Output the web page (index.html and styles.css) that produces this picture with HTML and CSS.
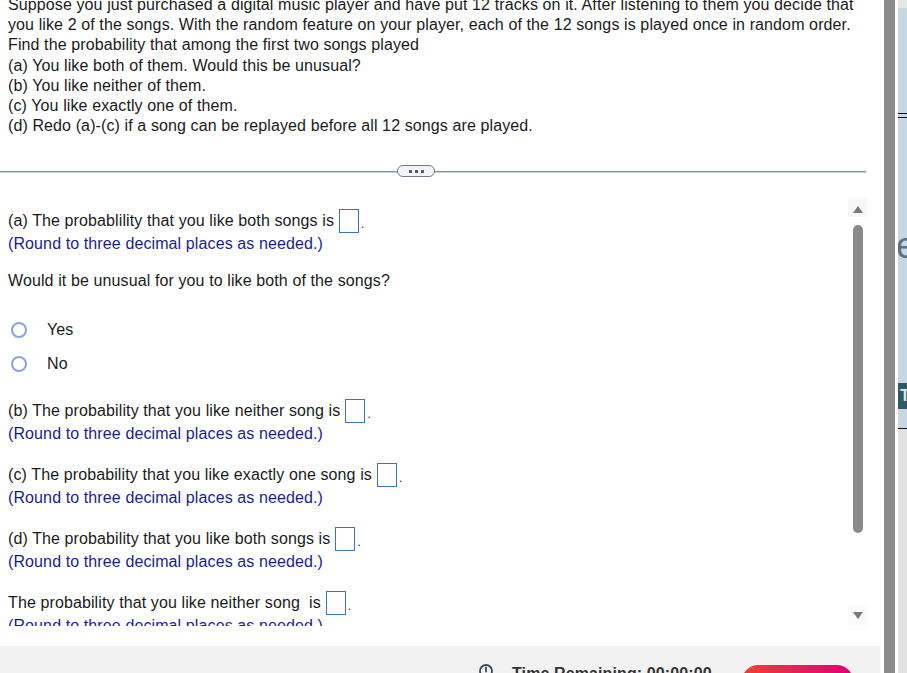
FILE: index.html
```html
<!DOCTYPE html>
<html lang="en">
<head>
  <meta charset="UTF-8">
  <title>Homework - Question</title>
  <link rel="stylesheet" href="styles.css">
</head>
<body>
  <div class="main">
    <div class="question">
      Suppose you just purchased a digital music player and have put 12 tracks on it. After listening to them you decide that<br>
      you like 2 of the songs. With the random feature on your player, each of the 12 songs is played once in random order.<br>
      Find the probability that among the first two songs played<br>
      (a) You like both of them. Would this be unusual?<br>
      (b) You like neither of them.<br>
      (c) You like exactly one of them.<br>
      (d) Redo (a)-(c) if a song can be replayed before all 12 songs are played.
    </div>

    <div class="divider">
      <span class="pill"><i></i><i></i><i></i></span>
    </div>

    <div class="answers">
      <div class="pane">
        <div class="part">
          <div class="prompt">(a) The probablility that you like both songs is<span class="box"></span><span class="dot">.</span></div>
          <div class="hint">(Round to three decimal places as needed.)</div>
        </div>
        <div class="ask">Would it be unusual for you to like both of the songs?</div>
        <div class="choices">
          <label class="choice"><span class="radio"></span>Yes</label>
          <label class="choice"><span class="radio"></span>No</label>
        </div>
        <div class="part">
          <div class="prompt">(b) The probability that you like neither song is<span class="box"></span><span class="dot">.</span></div>
          <div class="hint">(Round to three decimal places as needed.)</div>
        </div>
        <div class="part">
          <div class="prompt">(c) The probability that you like exactly one song is<span class="box"></span><span class="dot">.</span></div>
          <div class="hint">(Round to three decimal places as needed.)</div>
        </div>
        <div class="part">
          <div class="prompt">(d) The probability that you like both songs is<span class="box"></span><span class="dot">.</span></div>
          <div class="hint">(Round to three decimal places as needed.)</div>
        </div>
        <div class="part">
          <div class="prompt">The probability that you like neither song&nbsp; is<span class="box"></span><span class="dot">.</span></div>
          <div class="hint">(Round to three decimal places as needed.)</div>
        </div>
      </div>
      <div class="scrollbar">
        <div class="sb-btn"><span class="arrow-up"></span></div>
        <div class="thumb"></div>
        <div class="sb-btn sb-down"><span class="arrow-down"></span></div>
      </div>
    </div>

    <div class="footer">
      <svg class="clock" width="14" height="14" viewBox="0 0 14 14">
        <circle cx="7" cy="7" r="6" fill="none" stroke="#3d4a55" stroke-width="1.8"/>
        <path d="M7 3.5V7.5" stroke="#3d4a55" stroke-width="1.8" stroke-linecap="round"/>
      </svg>
      <span class="timer">Time Remaining: 00:00:00</span>
      <button class="check">Check Answer</button>
    </div>
  </div>

  <div class="edge"></div>
  <div class="gap"></div>
  <div class="side">
    <div class="side-top"></div>
    <div class="side-band"></div>
    <div class="side-rule"></div>
    <div class="side-band side-thin"></div>
    <div class="side-rule"></div>
    <div class="side-band side-letter">e</div>
    <div class="side-tab">T</div>
    <div class="side-band side-short"></div>
    <div class="side-rule"></div>
    <div class="side-rest"></div>
  </div>
</body>
</html>
```

FILE: styles.css
```css
html, body {
  margin: 0;
  height: 673px;
  overflow: hidden;
}
body {
  font-family: "Liberation Sans", Arial, sans-serif;
  font-size: 16px;
  letter-spacing: 0.11px;
  color: #1a1a1a;
  background: #fff;
  display: flex;
}
.main {
  width: 884px;
  flex-shrink: 0;
  display: flex;
  flex-direction: column;
}
.question {
  margin-top: -5px;
  padding: 0 8px;
  line-height: 20.2px;
  white-space: nowrap;
}
.divider {
  width: 866px;
  height: 13px;
  margin-top: 29px;
  display: flex;
  align-items: center;
  padding-left: 397px;
  box-sizing: border-box;
  background: linear-gradient(#8a93a0, #8a93a0) no-repeat 0 6px / 100% 1.5px;
}
.pill {
  width: 36px;
  height: 10px;
  border: 1.5px solid #6f7a88;
  border-radius: 7px;
  background: #f2f4f6;
  display: flex;
  align-items: center;
  justify-content: center;
  gap: 3px;
}
.pill i {
  width: 3px;
  height: 3px;
  background: #555c66;
}
.answers {
  display: flex;
  height: 428px;
  margin-top: 21px;
  width: 867px;
}
.pane {
  flex: 1;
  padding: 11px 0 0 8px;
  overflow: hidden;
}
.part {
  margin-bottom: 18px;
}
.prompt {
  display: flex;
  align-items: center;
  height: 24px;
  white-space: nowrap;
}
.box {
  width: 20px;
  height: 24px;
  box-sizing: border-box;
  border: 1.5px solid #3b6fd6;
  margin-left: 5px;
}
.dot {
  margin-left: 2px;
  font-size: 12px;
  align-self: flex-end;
  line-height: 18px;
}
.hint {
  line-height: 22px;
  color: #1c1c92;
}
.part:first-child {
  margin-bottom: 16px;
}
.ask {
  line-height: 20px;
}
.choices {
  margin: 27px 0 23px;
  display: flex;
  flex-direction: column;
  gap: 10px;
}
.choice {
  display: flex;
  align-items: center;
  height: 24px;
  padding-left: 3px;
}
.radio {
  width: 12px;
  height: 12px;
  border: 2px solid #8e9fde;
  border-radius: 50%;
  margin-right: 20px;
}
.scrollbar {
  width: 19px;
  display: flex;
  flex-direction: column;
  align-items: center;
}
.sb-btn {
  width: 19px;
  height: 19px;
  background: #f7f7f7;
  display: flex;
  align-items: center;
  justify-content: center;
  flex-shrink: 0;
  padding-top: 4px;
  box-sizing: border-box;
}
.sb-down {
  margin-top: auto;
  margin-bottom: 1px;
  padding-top: 0;
  background: #fafafa;
}
.arrow-up {
  border-left: 5px solid transparent;
  border-right: 5px solid transparent;
  border-bottom: 7px solid #777;
}
.arrow-down {
  border-left: 5px solid transparent;
  border-right: 5px solid transparent;
  border-top: 7px solid #777;
}
.thumb {
  margin-top: 8px;
  width: 10px;
  height: 308px;
  border-radius: 5px;
  background: #8a8a8a;
}
.footer {
  margin-top: 20px;
  width: 880px;
  height: 40px;
  background: #f2f2f2;
  display: flex;
  align-items: flex-start;
  padding-top: 18px;
  box-sizing: border-box;
}
.clock {
  margin-left: 479px;
  margin-top: 0;
}
.timer {
  margin-left: 19px;
  font-weight: bold;
  color: #333;
  line-height: 20px;
}
.check {
  margin-left: auto;
  margin-right: 27px;
  margin-top: 1px;
  width: 111px;
  height: 32px;
  border: none;
  border-radius: 16px;
  background: linear-gradient(90deg, #ea4335, #df0078);
  color: #fff;
  font-family: inherit;
  font-size: 15px;
  font-weight: bold;
  padding-top: 14px;
}
.edge {
  width: 11px;
  flex-shrink: 0;
  background: #8c8c8c;
}
.gap {
  width: 3px;
  flex-shrink: 0;
  background: #fff;
}
.side {
  flex: 1;
  overflow: hidden;
  display: flex;
  flex-direction: column;
}
.side-top {
  height: 8px;
  background: #e6e6e6;
}
.side-band {
  height: 105px;
  background: #c9d7e0;
}
.side-rule {
  height: 1px;
  background: #111;
}
.side-thin {
  height: 3px;
}
.side-letter {
  height: 265px;
  padding-top: 110px;
  box-sizing: border-box;
  font-size: 36px;
  line-height: 36px;
  color: #5a7080;
  text-indent: -2px;
}
.side-tab {
  height: 26px;
  background: #2e5960;
  color: #dfe7ea;
  font-weight: bold;
  font-size: 16px;
  line-height: 26px;
  padding-left: 2px;
}
.side-short {
  height: 19px;
}
.side-rest {
  flex: 1;
  background: #e2e2e2;
}
```
